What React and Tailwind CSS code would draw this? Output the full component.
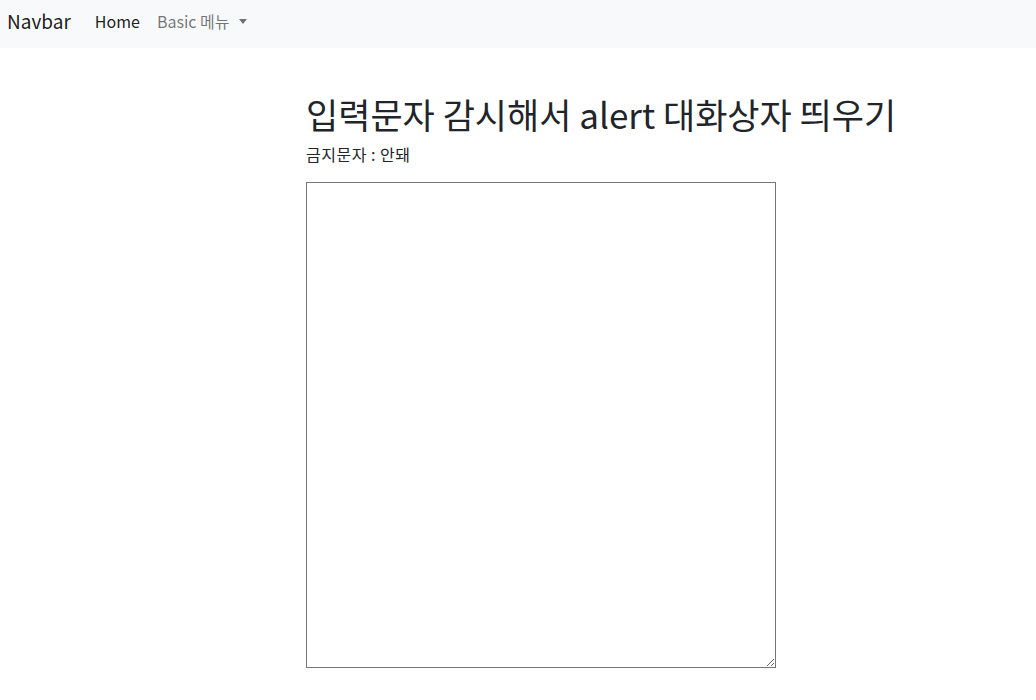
export default function App() {
  return (
    <div className="min-h-[700px] bg-white text-[#212529]" style={{ fontFamily: '"Noto Sans CJK KR", "Noto Sans", sans-serif' }}>
      <nav className="h-[48px] bg-[#f8f9fa] flex items-start pt-[9px] pl-[7px]">
        <span className="text-[19px] leading-[24px] text-[rgba(0,0,0,0.9)]">Navbar</span>
        <span className="ml-[24px] text-[16px] leading-[24px] text-[rgba(0,0,0,0.9)]">Home</span>
        <span className="ml-[17px] text-[16px] leading-[24px] text-[rgba(0,0,0,0.55)] flex items-center">
          Basic 메뉴
          <span className="ml-[10px] w-0 h-0 border-l-[4px] border-r-[4px] border-t-[5px] border-l-transparent border-r-transparent border-t-[rgba(0,0,0,0.55)]"></span>
        </span>
      </nav>
      <main className="pl-[306px] pt-[44px]">
        <h1 className="text-[35px] leading-[44px] font-normal">입력문자 감시해서 alert 대화상자 띄우기</h1>
        <p className="text-[16px] leading-[24px] mt-[6px] tracking-[0.5px]">금지문자 : 안돼</p>
        <textarea className="mt-[16px] block w-[470px] h-[486px] border border-[#767676] resize-y"></textarea>
      </main>
    </div>
  );
}
